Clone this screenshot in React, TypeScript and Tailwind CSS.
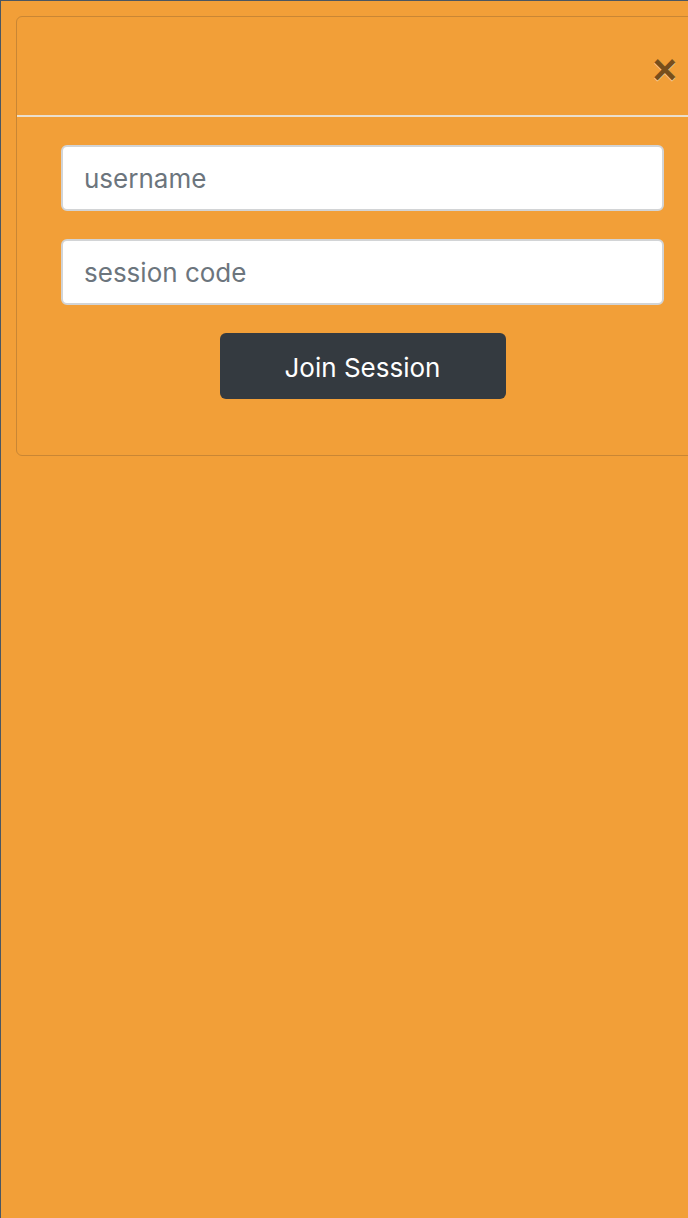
import React from "react";

export default function App() {
  return (
    <div
      className="w-[688px] h-[1218px] overflow-hidden bg-[#f29f38] border-l border-t border-[#4b5661]"
      style={{ fontFamily: "Inter, 'Noto Sans', sans-serif" }}
    >
      <div className="mt-[15px] ml-[15px] w-[693px] rounded-[6px] border border-[#c98634]">
        <div className="h-[100px] flex items-center justify-end border-b-2 border-[#eadfce] pr-[31px]">
          <span
            className="text-[42px] leading-none font-bold text-black opacity-50 mt-[8px]"
            style={{ fontFamily: "'Liberation Sans', Arial, sans-serif", textShadow: "0 1px 0 #fff" }}
          >
            ×
          </span>
        </div>
        <div className="px-[44px] pt-[28px] pb-[56px] flex flex-col items-center gap-[28px]">
          <input
            className="w-full h-[66px] rounded-[6px] border-2 border-[#d2d4d6] bg-white px-[21px] text-[26px] text-[#495057] placeholder:text-[#6c757d] outline-none"
            placeholder="username"
          />
          <input
            className="w-full h-[66px] rounded-[6px] border-2 border-[#d2d4d6] bg-white px-[21px] text-[26px] text-[#495057] placeholder:text-[#6c757d] outline-none"
            placeholder="session code"
          />
          <button className="w-[286px] h-[66px] rounded-[6px] bg-[#343a40] text-white text-[26px] pt-[2px]">
            Join Session
          </button>
        </div>
      </div>
    </div>
  );
}
